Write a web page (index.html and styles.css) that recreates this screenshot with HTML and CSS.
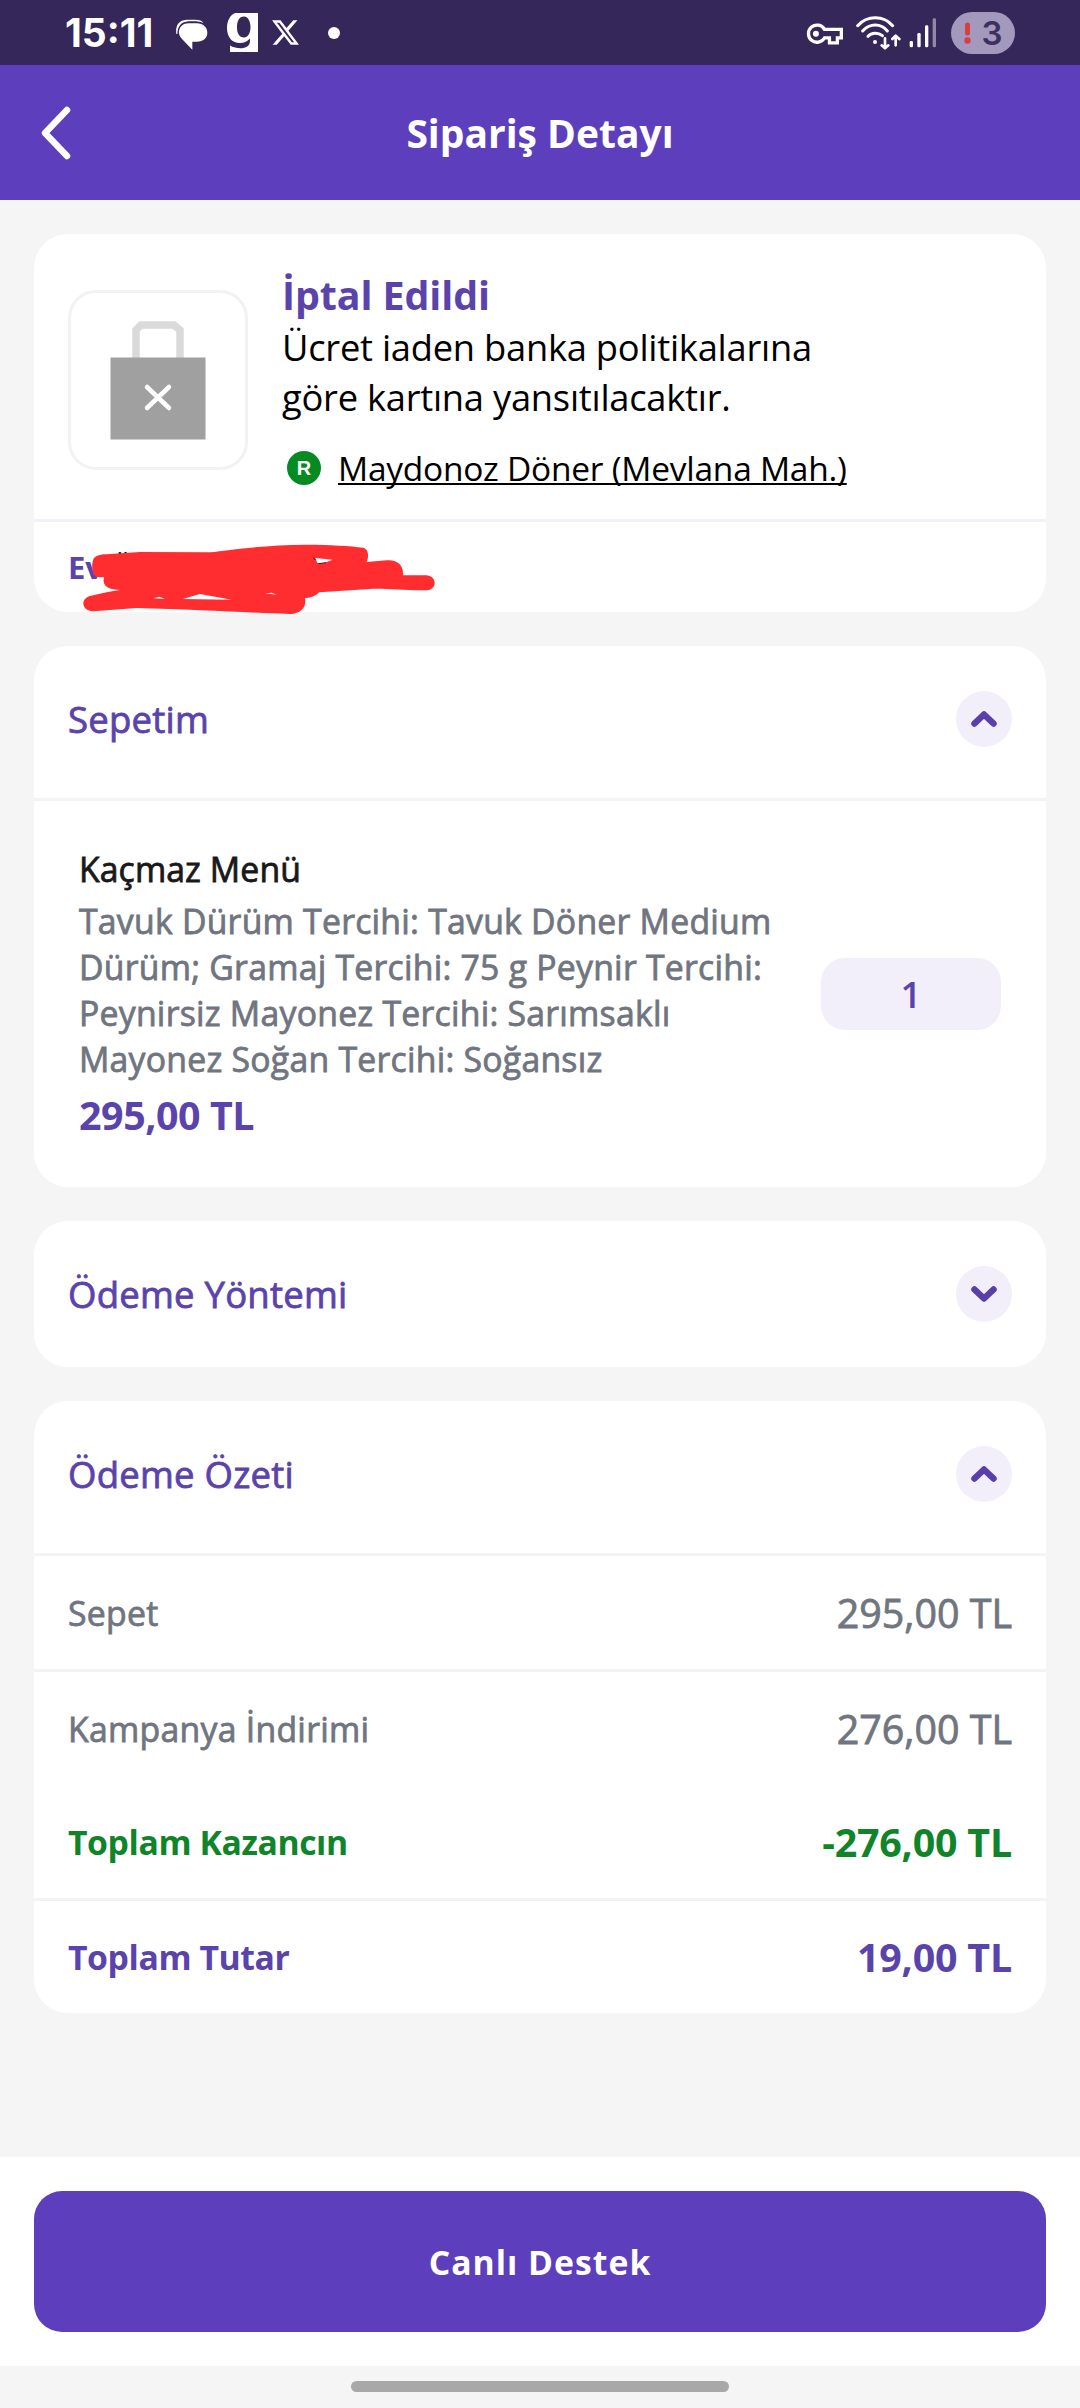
FILE: index.html
```html
<!DOCTYPE html>
<html lang="tr">
<head>
<meta charset="utf-8">
<title>Sipariş Detayı</title>
<link rel="stylesheet" href="styles.css">
</head>
<body>
<div class="status">
  <span class="clock">15:11</span>
  <svg class="ic-chat" width="32" height="31" viewBox="527 55 96 93"><path fill="#fff" d="M565 68H590C608 68 621 80 621 96C621 112 608 123 590 123H576V147L545 115C538 108 535 100 536 92C538 78 548 68 565 68ZM528 100C524 70 540 57 560 57H585C598 57 605 60 609 67C598 63 590 62 565 62C543 64 532 75 531 100Z"/></svg>
  <svg class="ic-g" width="31" height="39" viewBox="0 0 31 39"><path fill="#fff" fill-rule="evenodd" d="M8 0H31V39H3V32.500C10 36.500 23 37 23 28V25.500C20 28.500 17 30 13 30C5 30 0 24 0 15C0 8 3 2 8 0ZM17 3.500C12 3.500 10 8.500 10 14C10 20 12 24.500 17 24.500C21 24.500 23.500 20 23.500 14C23.500 8.500 21 3.500 17 3.500Z"/></svg>
  <svg class="ic-x" width="27" height="25" viewBox="1.200 2.200 21.600 19.600"><path fill="#fff" d="M18.244 2.250h3.308l-7.227 8.260 8.502 11.240H16.170l-5.214-6.817L4.990 21.750H1.680l7.730-8.835L1.254 2.250H8.080l4.713 6.231zm-1.161 17.520h1.833L7.084 4.126H5.117z"/></svg>
  <span class="dot"></span>
  <span class="spacer"></span>
  <svg class="ic-key" width="37" height="22" viewBox="317 67 112 66"><g fill="none" stroke="#fff" stroke-width="10"><path d="M373 86A26 26 0 1 0 373 112H388V127H412V112H424V86Z"/></g><circle cx="347" cy="99" r="9" fill="#fff"/></svg>
  <svg class="ic-wifi" width="45" height="34" viewBox="467 47 135 102"><g fill="none" stroke="#fff" stroke-width="9" stroke-linecap="round" stroke-linejoin="round"><path d="M472 76C500 44 550 44 577 76M487 92C508 68 542 68 561 92M503 108C514 96 534 96 546 106"/><path stroke-width="8" d="M554 114V143M544 135L554 144L564 135M586 135V107M576 116L586 106L597 116"/></g><circle cx="524" cy="125" r="6" fill="#fff"/></svg>
  <svg class="ic-signal" width="28" height="30" viewBox="629 53 84 90"><g fill="#fff"><rect x="631" y="122" width="10" height="19" rx="4"/><rect x="654" y="98" width="10" height="43" rx="4"/><rect x="677" y="75" width="10" height="66" rx="4"/><rect x="700" y="54" width="10" height="87" rx="4" opacity=".45"/></g></svg>
  <span class="battery"><svg width="7" height="22" viewBox="0 0 7 22"><path stroke="#d8403f" stroke-width="5" stroke-linecap="round" d="M3.500 3V11"/><circle cx="3.500" cy="18.500" r="3.200" fill="#d8403f"/></svg><b>3</b></span>
</div>

<header class="bar">
  <svg class="back" width="30" height="54" viewBox="0 0 30 54"><path fill="none" stroke="#fff" stroke-width="6.500" stroke-linecap="round" stroke-linejoin="round" d="M26 4L4 27L26 50"/></svg>
  <h1>Sipariş Detayı</h1>
</header>

<main class="content">
  <section class="card">
    <div class="summary">
      <div class="thumb"><svg width="96" height="119" viewBox="0 0 96 119"><path fill="none" stroke="#dadada" stroke-width="7.500" d="M26 37V9L31 4H64L70 9V37"/><path fill="#a0a0a0" d="M.5 36.500H95.500V118.500H.5Z"/><path fill="none" stroke="#fff" stroke-width="4.500" stroke-linecap="round" d="M37 66L59 87M59 66L37 87"/></svg></div>
      <div class="info">
        <h2>İptal Edildi</h2>
        <p class="note">Ücret iaden banka politikalarına göre kartına yansıtılacaktır.</p>
        <div class="store"><span class="badge">R</span><a>Maydonoz Döner (Mevlana Mah.)</a></div>
      </div>
    </div>
    <div class="address">
      <b>Ev</b> <span class="street">Ö</span>
      <svg class="scribble" width="360" height="77" viewBox="150 120 1080 231"><path fill="#ff2d2f" fill-rule="evenodd" d="M188 185C190 170 205 163 230 163L330 156L540 157C600 150 700 135 830 134C900 134 960 138 1000 143C1018 150 1016 170 1010 186L1070 181C1105 178 1122 200 1119 226L1190 226C1222 230 1222 268 1190 271C1120 272 1060 264 1020 267L868 277C855 290 840 295 825 294C830 320 815 340 780 342C650 338 500 328 320 324L190 334C150 332 150 290 190 286C215 280 245 273 270 270C240 268 215 262 222 232L200 231C188 225 184 200 188 185ZM856 174L908 179L880 190L862 189ZM370 295L388 290L405 297ZM458 297L510 282L605 299ZM705 280L725 278L740 284Z"/><path fill="none" stroke="#222" stroke-width="3" d="M850 173L856 180M866 191L888 188"/></svg>
    </div>
  </section>

  <section class="card">
    <div class="head open"><h3>Sepetim</h3><span class="toggle"><svg width="28" height="18" viewBox="0 0 28 18"><path d="M4.500 13.500L14 4.500L23.500 13.500"/></svg></span></div>
    <div class="item">
      <div class="desc">
        <h4>Kaçmaz Menü</h4>
        <p>Tavuk Dürüm Tercihi: Tavuk Döner Medium Dürüm; Gramaj Tercihi: 75 g Peynir Tercihi: Peynirsiz Mayonez Tercihi: Sarımsaklı Mayonez Soğan Tercihi: Soğansız</p>
        <strong>295,00 TL</strong>
      </div>
      <span class="qty">1</span>
    </div>
  </section>

  <section class="card payment">
    <div class="head"><h3>Ödeme Yöntemi</h3><span class="toggle"><svg width="28" height="18" viewBox="0 0 28 18"><path d="M4.500 4.500L14 13.500L23.500 4.500"/></svg></span></div>
  </section>

  <section class="card">
    <div class="head open"><h3>Ödeme Özeti</h3><span class="toggle"><svg width="28" height="18" viewBox="0 0 28 18"><path d="M4.500 13.500L14 4.500L23.500 13.500"/></svg></span></div>
    <div class="row line"><span>Sepet</span><span class="amount">295,00 TL</span></div>
    <div class="row"><span>Kampanya İndirimi</span><span class="amount">276,00 TL</span></div>
    <div class="row line gain"><span>Toplam Kazancın</span><span class="amount">-276,00 TL</span></div>
    <div class="row total"><span>Toplam Tutar</span><span class="amount">19,00 TL</span></div>
  </section>
</main>

<footer class="footer"><button class="support">Canlı Destek</button></footer>
<div class="nav"><span></span></div>
</body>
</html>
```
FILE: styles.css
```css
* { box-sizing: border-box; }
body {
  margin: 0;
  height: 2408px;
  display: flex;
  flex-direction: column;
  background: #f5f5f5;
  color: #000;
  font-family: "Open Sans", "Noto Sans", sans-serif;
}
h1, h2, h3, h4, p { margin: 0; }
svg { display: block; flex: none; }

.status {
  height: 65px;
  padding: 0 65px;
  display: flex;
  align-items: center;
  background: #352759;
}
.clock {
  width: 111px;
  font: 700 39px/64px Inter, sans-serif;
  color: #fff;
}
.ic-chat { margin-top: 4px; }
.ic-g { margin-left: 19px; }
.ic-x { margin-left: 14px; }
.dot { width: 12px; height: 12px; margin-left: 29px; border-radius: 50%; background: #fff; }
.spacer { flex: 1; }
.ic-key { margin-top: 2px; }
.ic-wifi { margin-left: 13px; }
.ic-signal { margin-left: 8px; }
.battery {
  width: 64px;
  height: 42px;
  margin-left: 14px;
  border-radius: 21px;
  background: #a399bd;
  display: flex;
  align-items: center;
  justify-content: center;
  gap: 11px;
  font: 600 33px/42px Inter, sans-serif;
  color: #3b305e;
}
.battery b { font-weight: 600; }

.bar {
  height: 135px;
  padding: 0 41px;
  display: grid;
  grid-template-columns: 60px 1fr 60px;
  align-items: center;
  background: #5d3ebc;
  color: #fff;
}
.bar h1 { font-size: 39px; font-weight: 700; line-height: 50px; text-align: center; }

.content {
  flex: 1;
  padding: 34px 34px 0;
  display: flex;
  flex-direction: column;
  gap: 34px;
}
.card { border-radius: 34px; background: #fff; }

.summary {
  height: 288px;
  padding: 36px 34px 0;
  display: flex;
  gap: 34px;
  border-bottom: 3px solid #f1f1f7;
}
.thumb {
  width: 180px;
  height: 180px;
  margin-top: 20px;
  padding-top: 28px;
  flex: none;
  display: flex;
  justify-content: center;
  border: 3px solid #f2f2f4;
  border-radius: 28px;
}
.info { width: 600px; }
.info h2 { font-size: 39.400px; line-height: 50px; font-weight: 700; letter-spacing: -.1px; color: #5b43ac; }
.note { margin-top: 2px; font-size: 36.300px; line-height: 50px; letter-spacing: -.25px; }
.store {
  margin-top: 23px;
  display: flex;
  align-items: center;
  font-size: 33.500px;
  line-height: 46px;
  letter-spacing: -.25px;
}
.store a {
  text-decoration: underline;
  text-decoration-thickness: 1.500px;
  text-underline-offset: 2px;
  text-decoration-skip-ink: none;
  white-space: nowrap;
}
.badge {
  width: 34px;
  height: 34px;
  margin: 0 17px 0 5px;
  border-radius: 50%;
  background: #078a22;
  color: #fff;
  font: 700 20px/34px "Liberation Sans", sans-serif;
  letter-spacing: 0;
  text-align: center;
}

.address {
  position: relative;
  height: 90px;
  padding: 24px 34px 0;
  font-size: 31px;
  line-height: 42px;
}
.address b { font-weight: 700; color: #5b43ac; }
.street { font-size: 30px; }
.scribble { position: absolute; left: 46px; top: 18px; }

.head { height: 145px; padding: 0 34px; display: flex; align-items: center; justify-content: space-between; }
.open { height: 155px; padding-bottom: 7px; border-bottom: 3px solid #f3f3f4; }
.head h3 {
  font-size: 36.560px;
  font-weight: 400;
  letter-spacing: .22px;
  -webkit-text-stroke: .8px #5b43ac;
  color: #5b43ac;
}
.toggle {
  width: 56px;
  height: 56px;
  border-radius: 50%;
  display: flex;
  align-items: center;
  justify-content: center;
  background: #f2effb;
}
.toggle path { fill: none; stroke: #5a3fa8; stroke-width: 6.500; stroke-linecap: round; stroke-linejoin: round; }
.payment { height: 146px; }

.item { height: 386px; padding: 0 45px; display: flex; align-items: center; justify-content: space-between; }
.desc { width: 710px; display: flex; flex-direction: column; gap: 6px; font-size: 33.750px; line-height: 46px; }
.desc h4 { font-size: inherit; font-weight: 400; letter-spacing: .1px; color: #191919; -webkit-text-stroke: .8px #191919; }
.desc p { letter-spacing: .25px; color: #70757f; -webkit-text-stroke: .8px #70757f; }
.desc strong { font-size: 39.400px; line-height: 54px; font-weight: 700; letter-spacing: -.45px; color: #5b43ac; }
.qty {
  width: 180px;
  height: 72px;
  border-radius: 24px;
  background: #f2effb;
  color: #5b43ac;
  font-size: 36.560px;
  font-weight: 600;
  line-height: 72px;
  text-align: center;
}

.row {
  height: 113px;
  padding: 0 34px;
  display: flex;
  align-items: center;
  justify-content: space-between;
  font-size: 33.750px;
  letter-spacing: .28px;
  color: #70757f;
  -webkit-text-stroke: .8px #70757f;
}
.line { height: 116px; border-bottom: 3px solid #f3f3f4; }
.amount { font-size: 39.400px; letter-spacing: 0; }
.gain, .total { font-weight: 700; letter-spacing: -.42px; -webkit-text-stroke: 0; }
.gain .amount, .total .amount { letter-spacing: -.2px; }
.gain { color: #108428; }
.total { height: 112px; color: #5b43ac; }

.footer { height: 209px; padding: 34px; background: #fff; }
.support {
  width: 100%;
  height: 141px;
  border: 0;
  border-radius: 28px;
  background: #5d3ebc;
  color: #fff;
  font: 700 33.750px/50px "Open Sans", sans-serif;
  letter-spacing: 1px;
}
.nav { height: 42px; padding-top: 15px; display: flex; justify-content: center; }
.nav span { width: 378px; height: 11px; border-radius: 6px; background: #a8a8a8; }
```
